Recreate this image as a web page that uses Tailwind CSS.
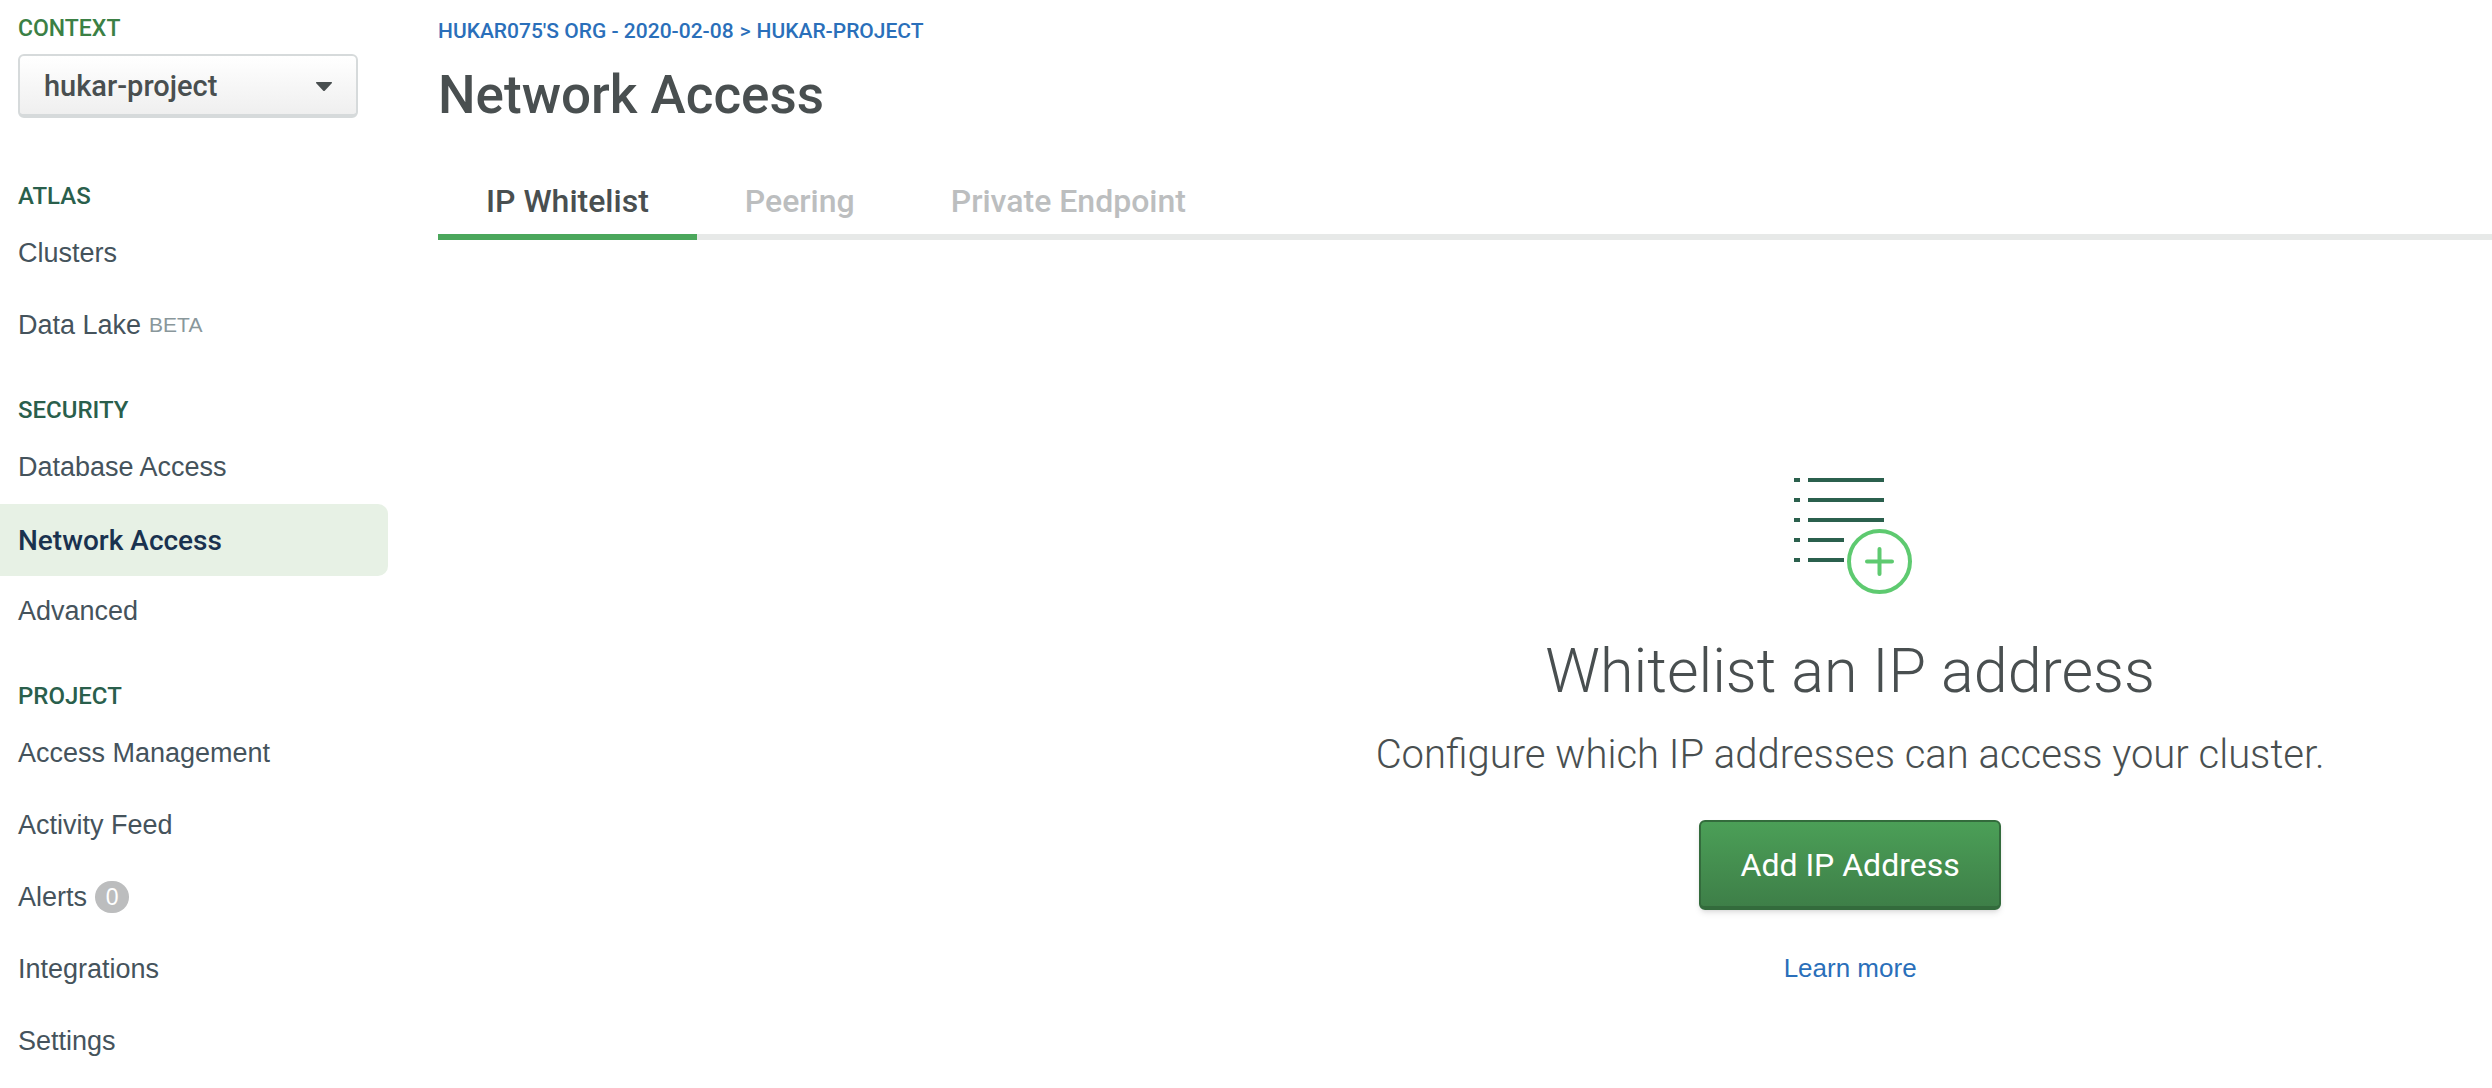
<!DOCTYPE html>
<html lang="en">
<head>
<meta charset="utf-8">
<meta name="viewport" content="width=device-width, initial-scale=1">
<title>Network Access</title>
<script src="https://cdn.jsdelivr.net/npm/@tailwindcss/browser@4"></script>
</head>
<body class="flex min-h-screen bg-white font-['Roboto',sans-serif] text-[#494f50]">
<aside class="w-[388px] shrink-0">
  <div class="pl-[18px] pr-[30px] pt-[15px]">
    <label for="project" class="block h-7 text-[23px]/7 font-medium text-[#3b8045]">CONTEXT</label>
    <div class="relative mt-[11px]">
      <select id="project" class="block h-16 w-full appearance-none rounded-md border-2 border-b-4 border-[#d6dadb] bg-linear-to-b from-white to-[#efefef] pl-6 pr-12 pt-1 text-[29px] font-medium text-[#494f50]">
        <option>hukar-project</option>
      </select>
      <svg class="pointer-events-none absolute right-[26px] top-7 h-[10px] w-4" viewBox="0 0 16 10" fill="#494f50" aria-hidden="true"><path d="M1 0H15Q17 0 15.500 1.500L9 8.500Q8 9.500 7 8.500L.5 1.500Q-1 0 1 0Z"/></svg>
    </div>
  </div>
  <nav class="pt-[30px] font-['Liberation_Sans',sans-serif] text-[27px] text-[#45535c]">
    <section class="pt-[34px]">
      <h2 class="mb-2 pl-[18px] font-['Roboto',sans-serif] text-2xl/7 font-medium text-[#2a5f4c]">ATLAS</h2>
      <a href="#" class="flex h-18 items-center pb-0.5 pl-[18px]">Clusters</a>
      <a href="#" class="flex h-18 items-center gap-2 pb-0.5 pl-[18px]">Data Lake <span class="text-[21px] text-[#89979b]">BETA</span></a>
    </section>
    <section class="pt-[34px]">
      <h2 class="mb-2 pl-[18px] font-['Roboto',sans-serif] text-2xl/7 font-medium text-[#2a5f4c]">SECURITY</h2>
      <a href="#" class="flex h-18 items-center pb-0.5 pl-[18px]">Database Access</a>
      <a href="#" aria-current="page" class="flex h-18 items-center rounded-r-[10px] bg-[#e7f1e5] pl-[18px] pt-0.5 font-['Roboto',sans-serif] text-[28px] font-medium text-[#1a324f]">Network Access</a>
      <a href="#" class="flex h-18 items-center pb-0.5 pl-[18px]">Advanced</a>
    </section>
    <section class="pt-[34px]">
      <h2 class="mb-2 pl-[18px] font-['Roboto',sans-serif] text-2xl/7 font-medium text-[#2a5f4c]">PROJECT</h2>
      <a href="#" class="flex h-18 items-center pb-0.5 pl-[18px]">Access Management</a>
      <a href="#" class="flex h-18 items-center pb-0.5 pl-[18px]">Activity Feed</a>
      <a href="#" class="flex h-18 items-center gap-2 pb-0.5 pl-[18px]">Alerts <span class="flex h-8 w-[34px] items-center justify-center rounded-full bg-[#bcbdbe] text-[23px] text-white">0</span></a>
      <a href="#" class="flex h-18 items-center pb-0.5 pl-[18px]">Integrations</a>
      <a href="#" class="flex h-18 items-center pb-0.5 pl-[18px]">Settings</a>
    </section>
  </nav>
</aside>
<main class="ml-[50px] min-w-0 flex-1">
  <p class="flex gap-1.5 pt-[17px] text-[21px]/7 font-medium text-[#2a6fba]">
    <a href="#">HUKAR075'S ORG - 2020-02-08</a><span>&gt;</span><a href="#">HUKAR-PROJECT</a>
  </p>
  <h1 class="mt-[18px] text-[53px]/16 font-medium">Network Access</h1>
  <div role="tablist" class="mt-[39px] flex border-b-6 border-[#e7e9e8] text-[32px] font-medium text-[#bcbebf]">
    <button role="tab" aria-selected="true" class="-mb-1.5 h-[74px] border-b-6 border-[#4ba75c] px-12 pt-0.5 text-[#494f50]">IP Whitelist</button>
    <button role="tab" aria-selected="false" class="h-[68px] px-12 pt-0.5">Peering</button>
    <button role="tab" aria-selected="false" class="h-[68px] px-12 pt-0.5">Private Endpoint</button>
  </div>
  <section class="ml-auto flex w-5/8 flex-col items-center pt-[238px]">
    <svg class="h-[116px] w-[124px]" viewBox="0 0 124 116" fill="none" stroke-width="4" aria-hidden="true">
      <g stroke="#2b604d"><path d="M6 2h6M20 2h76M6 22h6M20 22h76M6 42h6M20 42h76M6 62h6M20 62h36M6 82h6M20 82h36"/></g>
      <g stroke="#5eca70"><circle cx="91.500" cy="83.500" r="30.500"/><path stroke-linecap="round" d="M79 83.500h25M91.500 71v25"/></g>
    </svg>
    <h2 class="mt-[41px] text-[61px]/18 font-light">Whitelist an IP address</h2>
    <p class="mt-6 text-[40px]/12 font-light">Configure which IP addresses can access your cluster.</p>
    <button class="mt-[41px] h-[90px] w-[302px] rounded-md border-2 border-b-4 border-[#336b3c] bg-linear-to-b from-[#4b9f57] to-[#3e7f48] pt-0.5 text-[32px] text-white shadow-md shadow-black/10">Add IP Address</button>
    <a href="#" class="mt-10 font-['Liberation_Sans',sans-serif] text-[26px]/9 text-[#2a6fba]">Learn more</a>
  </section>
</main>
</body>
</html>
